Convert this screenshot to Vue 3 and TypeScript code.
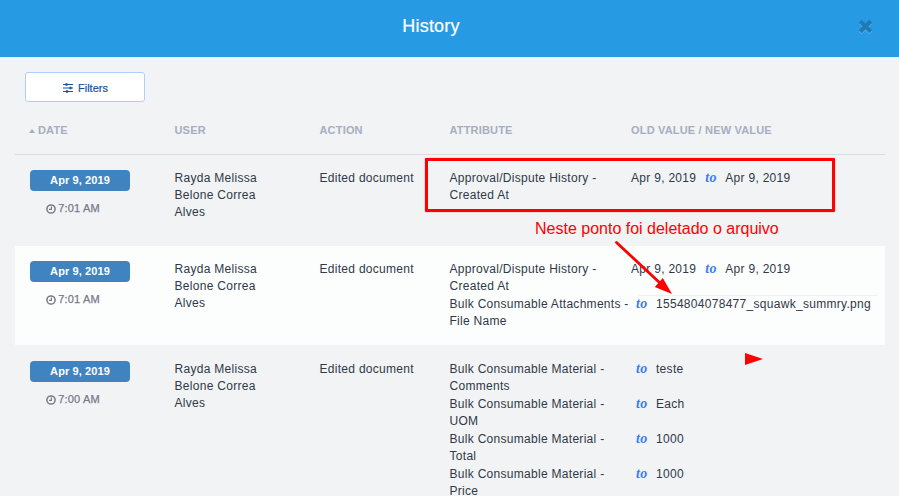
<script setup lang="ts">
interface Change {
  attribute: string
  detail: string
  oldValue?: string
  newValue: string
  ruled?: boolean
}

interface HistoryRow {
  id: number
  date: string
  time: string
  action: string
  user: string[]
  changes: Change[]
}

const user = ['Rayda Melissa', 'Belone Correa', 'Alves']
const approval: Change = {
  attribute: 'Approval/Dispute History -',
  detail: 'Created At',
  oldValue: 'Apr 9, 2019',
  newValue: 'Apr 9, 2019',
}
const material = (detail: string, newValue: string): Change => ({
  attribute: 'Bulk Consumable Material -',
  detail,
  newValue,
})

const rows: HistoryRow[] = [
  { id: 1, date: 'Apr 9, 2019', time: '7:01 AM', action: 'Edited document', user, changes: [approval] },
  {
    id: 2,
    date: 'Apr 9, 2019',
    time: '7:01 AM',
    action: 'Edited document',
    user,
    changes: [
      approval,
      {
        attribute: 'Bulk Consumable Attachments -',
        detail: 'File Name',
        newValue: '1554804078477_squawk_summry.png',
        ruled: true,
      },
    ],
  },
  {
    id: 3,
    date: 'Apr 9, 2019',
    time: '7:00 AM',
    action: 'Edited document',
    user,
    changes: [
      material('Comments', 'teste'),
      material('UOM', 'Each'),
      material('Total', '1000'),
      material('Price', '1000'),
    ],
  },
]
</script>

<template>
  <div class="modal">
    <header class="modal-header">
      <h1>History</h1>
      <button class="close" aria-label="Close">
        <svg width="17" height="18" viewBox="0 0 17 18">
          <path class="shine" d="M3.2 4.2l10.6 10.6M13.8 4.2L3.2 14.8" />
          <path class="cross" d="M3.2 3.2l10.6 10.6M13.8 3.2L3.2 13.8" />
        </svg>
      </button>
    </header>

    <main class="content">
      <button class="filters">
        <svg width="10" height="10" viewBox="0 0 10 10">
          <path d="M0 1.5h10M0 5h10M0 8.5h10" stroke="currentColor" stroke-width="1" />
          <path d="M2.5 0.3h2v2.4h-2zM6.5 3.8h2v2.4h-2zM3 7.3h2v2.4h-2z" fill="currentColor" />
        </svg>
        <span>Filters</span>
      </button>

      <section class="table">
        <div class="row head">
          <span class="sorted"><i class="caret"></i>DATE</span>
          <span>USER</span>
          <span>ACTION</span>
          <span>ATTRIBUTE</span>
          <span>OLD VALUE / NEW VALUE</span>
        </div>
        <div v-for="row in rows" :key="row.id" class="row entry">
          <div class="when">
            <span class="badge">{{ row.date }}</span>
            <span class="time">
              <svg width="10" height="10" viewBox="0 0 10 10" fill="none" stroke="currentColor">
                <circle cx="5" cy="5" r="4.1" stroke-width="1.5" />
                <path d="M5.4 2.4v3H3" stroke-width="1.2" />
              </svg>
              {{ row.time }}
            </span>
          </div>
          <div class="lines"><span v-for="name in row.user" :key="name">{{ name }}</span></div>
          <div>{{ row.action }}</div>
          <div class="changes">
            <div v-for="change in row.changes" :key="change.attribute + change.detail" class="change">
              <div class="lines">
                <span>{{ change.attribute }}</span>
                <span>{{ change.detail }}</span>
              </div>
              <div class="values" :class="{ ruled: change.ruled }">
                <span v-if="change.oldValue" class="old">{{ change.oldValue }}</span>
                <em>to</em>
                <span>{{ change.newValue }}</span>
              </div>
            </div>
          </div>
        </div>
      </section>
    </main>

    <div class="highlight"></div>
    <p class="note">Neste ponto foi deletado o arquivo</p>
    <svg class="arrows" width="899" height="496" viewBox="0 0 899 496">
      <path d="M616.5 242.5L660 283" stroke="#f00" stroke-width="2.8" stroke-linecap="round" />
      <path d="M672 294L654.8 287L662.8 278Z" fill="#f00" />
      <path d="M745 353L763 359L745 365Z" fill="#f00" />
    </svg>
  </div>
</template>

<style>
body {
  margin: 0;
  overflow: hidden;
}
</style>

<style scoped>
.modal {
  position: relative;
  width: 899px;
  height: 496px;
  overflow: hidden;
  background: #f1f3f5;
  color: #303947;
  font: 12px/17px "Liberation Sans", Arial, sans-serif;
  letter-spacing: 0.29px;
}

.modal-header {
  display: grid;
  grid-template-columns: 1fr auto 1fr;
  align-items: center;
  height: 57px;
  box-sizing: border-box;
  padding: 0 25px 5px;
  background: #279ae4;
}

h1 {
  grid-column: 2;
  margin: 0;
  padding-right: 37px;
  color: #fff;
  font-size: 18px;
  font-weight: 400;
  line-height: 24px;
  letter-spacing: 0.2px;
  -webkit-text-stroke: 0.2px currentColor;
}

button {
  font-family: inherit;
}

.close {
  justify-self: end;
  display: flex;
  padding: 2px 0 0;
  border: 0;
  background: none;
}

.close path {
  fill: none;
  stroke-width: 4.2;
}

.close .shine {
  stroke: #62b4ea;
}

.close .cross {
  stroke: #1f7ab5;
}

.content {
  padding: 15px 14px 0 15px;
}

.filters {
  display: flex;
  align-items: center;
  justify-content: center;
  gap: 5px;
  width: 120px;
  height: 30px;
  box-sizing: border-box;
  margin-left: 10px;
  padding: 2px 0 0 1px;
  border: 1px solid #b0cdfb;
  border-radius: 3px;
  background: #fff;
  color: #174ea6;
  font-size: 11px;
  -webkit-text-stroke: 0.2px currentColor;
}

.row {
  display: grid;
  grid-template-columns: 145px 145px 130px 181.5px 1fr;
  padding-left: 14.5px;
}

.head {
  height: 53px;
  box-sizing: border-box;
  padding-top: 20px;
  border-bottom: 1px solid #d8dbdf;
  color: #a4afc0;
  font-size: 11px;
  font-weight: 700;
  letter-spacing: 0.18px;
}

.sorted {
  display: flex;
  align-items: center;
  align-self: start;
  gap: 3px;
  margin-left: -0.5px;
}

.caret {
  width: 0;
  border: 3.5px solid transparent;
  border-width: 0 3.5px 4px;
  border-bottom-color: #a4afc0;
}

.entry {
  min-height: 91px;
  box-sizing: border-box;
  padding-top: 15px;
  padding-bottom: 14px;
}

.entry:nth-child(odd) {
  background: #fcfdfd;
}

.entry:last-child {
  padding-top: 16px;
  background: none;
}

.entry:nth-child(3) {
  background: #fcfdfd;
}

.when {
  display: flex;
  flex-direction: column;
  align-items: center;
  width: 100px;
  margin-left: 0.5px;
}

.badge {
  width: 100px;
  height: 21px;
  border-radius: 4px;
  background: #3f84c1;
  color: #fff;
  font-size: 11px;
  font-weight: 700;
  line-height: 21px;
  letter-spacing: 0.1px;
  text-align: center;
}

.time {
  display: flex;
  align-items: center;
  gap: 2px;
  margin: 9px 14px 0 0;
  color: #777a89;
  font-size: 11px;
  letter-spacing: 0.15px;
  -webkit-text-stroke: 0.25px currentColor;
}

.lines {
  display: flex;
  flex-direction: column;
  white-space: nowrap;
}

.changes {
  grid-column: 4 / 6;
}

.change {
  display: grid;
  grid-template-columns: 181.5px 1fr;
  height: 35px;
}

.values {
  display: flex;
  align-items: flex-start;
  white-space: nowrap;
}

.ruled {
  box-shadow: 0 -9px 0 -8px #eef0f3;
}

.old {
  margin-right: 4px;
}

em {
  width: 20px;
  box-sizing: border-box;
  margin-left: 5px;
  color: #3b7df0;
  font: italic 700 14px/16px "Liberation Serif", serif;
  letter-spacing: 0.3px;
}

.highlight {
  position: absolute;
  left: 425px;
  top: 158px;
  width: 404px;
  height: 48px;
  border: 3px solid #f00;
  border-radius: 1px;
  box-shadow: 0 0 1px #f00;
}

.note {
  position: absolute;
  left: 535px;
  top: 219px;
  margin: 0;
  color: #f00;
  font-size: 16px;
  line-height: 20px;
  letter-spacing: 0;
  white-space: nowrap;
}

.arrows {
  position: absolute;
  left: 0;
  top: 0;
}
</style>
